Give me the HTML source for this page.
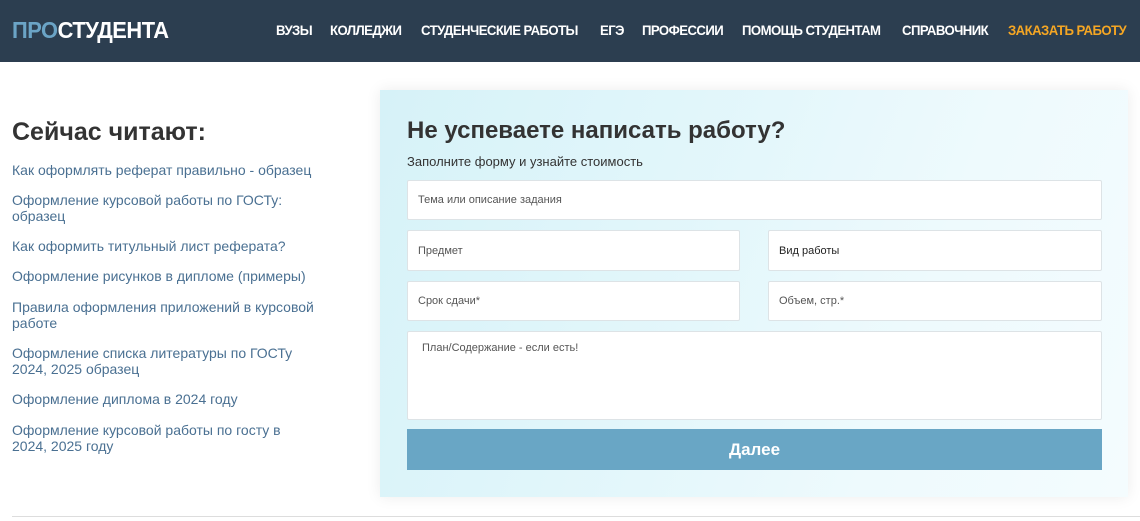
<!DOCTYPE html>
<html><head><meta charset="utf-8"><style>
*{box-sizing:border-box;margin:0;padding:0}
body{width:1140px;height:521px;background:#fff;font-family:"Liberation Sans",sans-serif;position:relative;overflow:hidden}
.hdr{position:absolute;left:0;top:0;width:1140px;height:62px;background:#2c3e50}
.logo{position:absolute;left:12px;top:17px;font-size:23px;font-weight:bold;color:#fff;letter-spacing:-0.5px;transform:scaleX(0.95);transform-origin:left}
.logo span{color:#6ba4c6}
.nav a{position:absolute;top:22px;font-size:14px;font-weight:bold;color:#fff;text-decoration:none;letter-spacing:-0.6px;white-space:nowrap;transform:scaleX(0.94);transform-origin:left}
.side h2{position:absolute;left:12px;top:118px;font-size:25px;font-weight:bold;color:#333}
.side a{position:absolute;left:12px;white-space:nowrap;font-size:14px;line-height:16px;color:#4a7092;text-decoration:none}
.card{position:absolute;left:380px;top:90px;width:748px;height:407px;background:linear-gradient(110deg,#d6f2f8 0%,#e4f7fb 45%,#eefafd 70%,#f4fcfe 100%);box-shadow:0 0 14px rgba(0,0,0,.08)}
.card h1{position:absolute;left:27px;top:27px;font-size:24px;font-weight:bold;color:#333}
.card p{position:absolute;left:27px;top:64px;font-size:13px;color:#333}
.f{position:absolute;background:#fff;border:1px solid #dde3e6;border-radius:2px;font-size:11px;color:#555;padding-left:10px;display:flex;align-items:center}
.btn{position:absolute;left:27px;top:339px;width:695px;height:41px;background:#69a6c5;color:#fff;font-weight:bold;font-size:17px;display:flex;align-items:center;justify-content:center}
.line{position:absolute;left:12px;right:0;top:516px;height:1px;background:#ddd}
</style></head><body>
<div class="hdr">
<div class="logo"><span>ПРО</span>СТУДЕНТА</div>
<div class="nav">
<a style="left:276px">ВУЗЫ</a>
<a style="left:330px">КОЛЛЕДЖИ</a>
<a style="left:421px">СТУДЕНЧЕСКИЕ РАБОТЫ</a>
<a style="left:600px">ЕГЭ</a>
<a style="left:642px">ПРОФЕССИИ</a>
<a style="left:742px">ПОМОЩЬ СТУДЕНТАМ</a>
<a style="left:902px">СПРАВОЧНИК</a>
<a style="left:1008px;color:#f5a623">ЗАКАЗАТЬ РАБОТУ</a>
</div></div>
<div class="side">
<h2>Сейчас читают:</h2>
<a style="top:162px">Как оформлять реферат правильно - образец</a>
<a style="top:192px">Оформление курсовой работы по ГОСТу:<br>образец</a>
<a style="top:238px">Как оформить титульный лист реферата?</a>
<a style="top:268px">Оформление рисунков в дипломе (примеры)</a>
<a style="top:299px">Правила оформления приложений в курсовой<br>работе</a>
<a style="top:345px">Оформление списка литературы по ГОСТу<br>2024, 2025 образец</a>
<a style="top:391px">Оформление диплома в 2024 году</a>
<a style="top:422px">Оформление курсовой работы по госту в<br>2024, 2025 году</a>
</div>
<div class="card">
<h1>Не успеваете написать работу?</h1>
<p>Заполните форму и узнайте стоимость</p>
<div class="f" style="left:27px;top:90px;width:695px;height:40px">Тема или описание задания</div>
<div class="f" style="left:27px;top:140px;width:333px;height:41px">Предмет</div>
<div class="f" style="left:388px;top:140px;width:334px;height:41px;color:#222">Вид работы</div>
<div class="f" style="left:27px;top:191px;width:333px;height:40px">Срок сдачи*</div>
<div class="f" style="left:388px;top:191px;width:334px;height:40px">Объем, стр.*</div>
<div class="f" style="left:27px;top:241px;width:695px;height:89px;align-items:flex-start;padding-top:10px;padding-left:14px">План/Содержание - если есть!</div>
<div class="btn">Далее</div>
</div>
<div class="line"></div>
</body></html>
